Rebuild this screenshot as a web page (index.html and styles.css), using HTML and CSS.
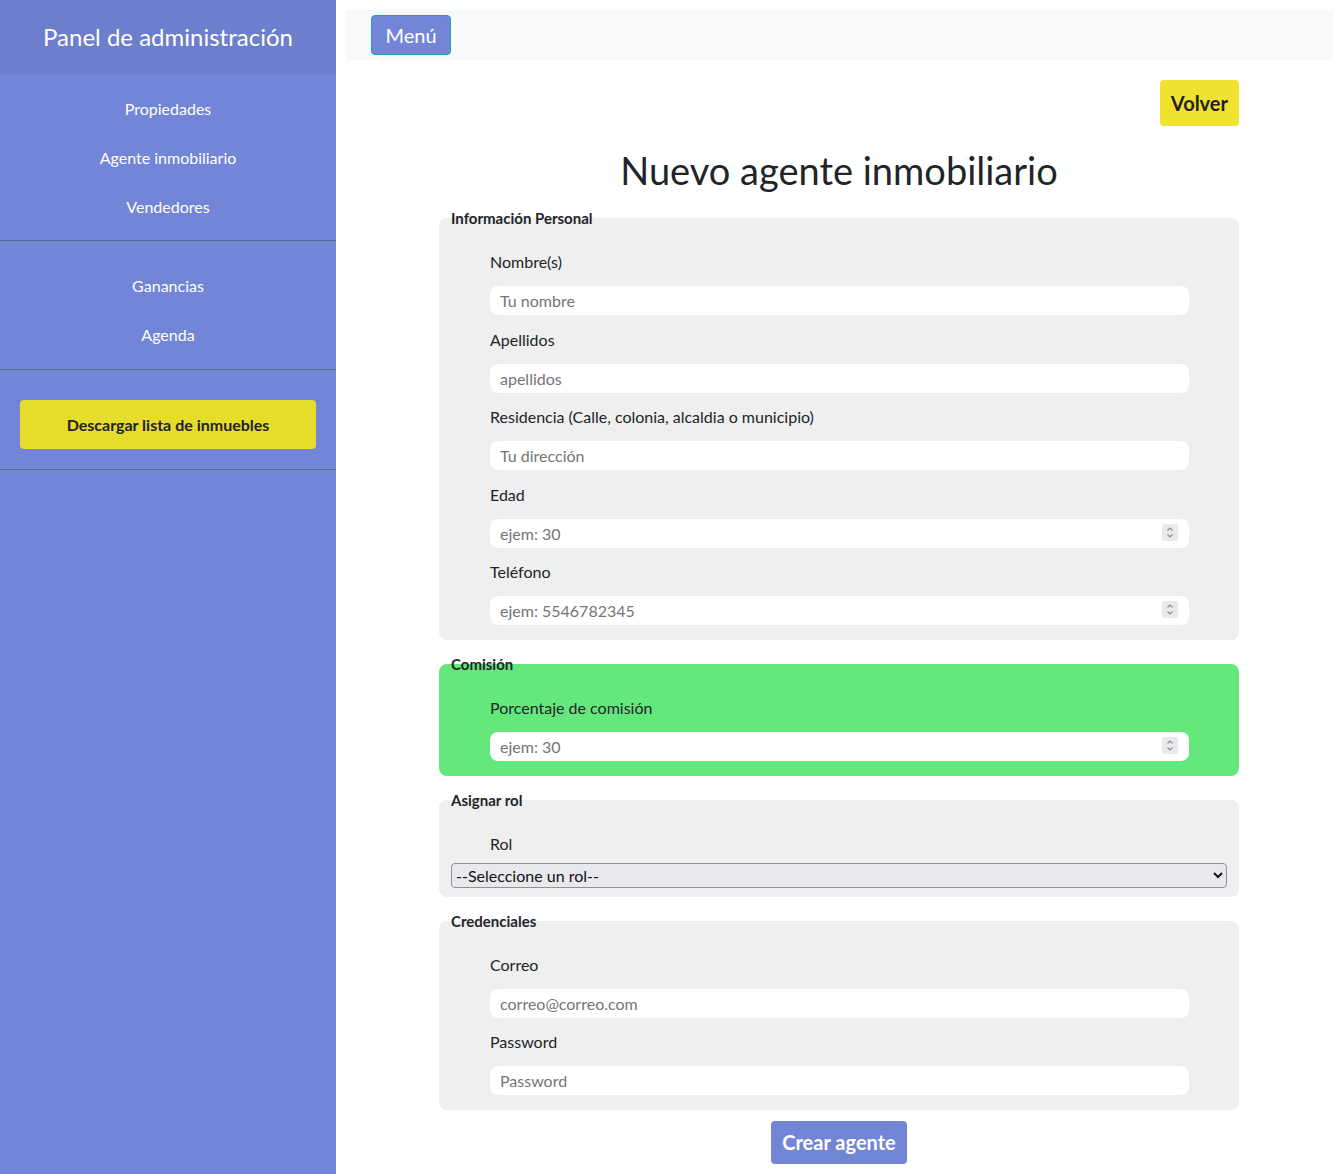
FILE: index.html
```html
<!DOCTYPE html>
<html lang="es">
<head>
<meta charset="utf-8">
<title>Nuevo agente inmobiliario</title>
<link rel="stylesheet" href="styles.css">
</head>
<body>
<div class="layout">
  <aside class="sidebar">
    <div class="sidebar-header">Panel de administración</div>
    <nav class="nav-section first">
      <a class="nav-link" href="#">Propiedades</a>
      <a class="nav-link" href="#">Agente inmobiliario</a>
      <a class="nav-link" href="#">Vendedores</a>
    </nav>
    <nav class="nav-section second">
      <a class="nav-link" href="#">Ganancias</a>
      <a class="nav-link" href="#">Agenda</a>
    </nav>
    <div class="nav-section third">
      <button class="download-btn" type="button">Descargar lista de inmuebles</button>
    </div>
  </aside>
  <main class="main">
    <div class="topbar">
      <button class="menu-btn" type="button">Menú</button>
    </div>
    <div class="container">
      <div class="back-row">
        <button class="back-btn" type="button">Volver</button>
      </div>
      <h1 class="title">Nuevo agente inmobiliario</h1>
      <form class="form">
        <fieldset class="group">
          <legend>Información Personal</legend>
          <div class="field">
            <label>Nombre(s)</label>
            <input type="text" placeholder="Tu nombre">
          </div>
          <div class="field">
            <label>Apellidos</label>
            <input type="text" placeholder="apellidos">
          </div>
          <div class="field">
            <label>Residencia (Calle, colonia, alcaldia o municipio)</label>
            <input type="text" placeholder="Tu dirección">
          </div>
          <div class="field">
            <label>Edad</label>
            <div class="num">
              <input type="number" placeholder="ejem: 30">
              <span class="spin"><svg width="16" height="17" viewBox="0 0 16 17"><path d="M5.5 6.5 L8 4 L10.5 6.5 M5.5 10.5 L8 13 L10.5 10.5" fill="none" stroke="#8a8a92" stroke-width="1.1"/></svg></span>
            </div>
          </div>
          <div class="field">
            <label>Teléfono</label>
            <div class="num">
              <input type="number" placeholder="ejem: 5546782345">
              <span class="spin"><svg width="16" height="17" viewBox="0 0 16 17"><path d="M5.5 6.5 L8 4 L10.5 6.5 M5.5 10.5 L8 13 L10.5 10.5" fill="none" stroke="#8a8a92" stroke-width="1.1"/></svg></span>
            </div>
          </div>
        </fieldset>
        <fieldset class="group green">
          <legend>Comisión</legend>
          <div class="field">
            <label>Porcentaje de comisión</label>
            <div class="num">
              <input type="number" placeholder="ejem: 30">
              <span class="spin"><svg width="16" height="17" viewBox="0 0 16 17"><path d="M5.5 6.5 L8 4 L10.5 6.5 M5.5 10.5 L8 13 L10.5 10.5" fill="none" stroke="#8a8a92" stroke-width="1.1"/></svg></span>
            </div>
          </div>
        </fieldset>
        <fieldset class="group role">
          <legend>Asignar rol</legend>
          <div class="field">
            <label>Rol</label>
          </div>
          <select class="select">
            <option>--Seleccione un rol--</option>
          </select>
        </fieldset>
        <fieldset class="group">
          <legend>Credenciales</legend>
          <div class="field">
            <label>Correo</label>
            <input type="email" placeholder="correo@correo.com">
          </div>
          <div class="field">
            <label>Password</label>
            <input type="password" placeholder="Password">
          </div>
        </fieldset>
        <div class="submit-row">
          <button class="submit-btn" type="button">Crear agente</button>
        </div>
      </form>
    </div>
  </main>
</div>
</body>
</html>
```

FILE: styles.css
```css
* { box-sizing: border-box; }

html, body {
  margin: 0;
  padding: 0;
  font-family: Lato, "Noto Sans", sans-serif;
  color: #212529;
  background: #fff;
}

.layout {
  display: flex;
  min-height: 1174px;
}

.sidebar {
  width: 336px;
  flex: 0 0 336px;
  background: #7385d6;
  color: #fff;
}

.sidebar-header {
  height: 74px;
  background: #6c7ecc;
  display: flex;
  align-items: center;
  justify-content: center;
  font-size: 24px;
  padding-bottom: 1px;
}

.nav-section {
  display: flex;
  flex-direction: column;
  border-bottom: 1px solid #4f6f8c;
}

.nav-section.first { padding: 11px 0 8px; }
.nav-section.second { padding: 21px 0 9px; }
.nav-section.third { padding: 30px 20px 20px; }

.nav-link {
  display: block;
  color: #fff;
  text-decoration: none;
  text-align: center;
  font-size: 16px;
  line-height: 24px;
  padding: 12px 0 13px;
}

.download-btn {
  width: 100%;
  height: 49px;
  border: none;
  border-radius: 4px;
  background: #e6dc2a;
  color: #222;
  font-family: inherit;
  font-weight: 700;
  font-size: 16px;
}

.main {
  flex: 1;
  padding: 10px;
}

.topbar {
  height: 50px;
  background: #f8f9fa;
  display: flex;
  align-items: center;
  padding: 0 25px;
}

.menu-btn {
  height: 40px;
  padding: 0 13.5px;
  background: #7385d6;
  color: #fff;
  border: 1px solid #1aa3b3;
  border-radius: 4px;
  font-family: inherit;
  font-size: 20px;
}

.container {
  width: 800px;
  margin: 20px 0 0 93px;
}

.back-row {
  display: flex;
  justify-content: flex-end;
}

.back-btn {
  height: 46px;
  padding: 0 11px;
  border: none;
  border-radius: 4px;
  background: #f0e22f;
  color: #222;
  font-family: inherit;
  font-weight: 700;
  font-size: 20px;
}

.title {
  margin: 21px 0 16px;
  text-align: center;
  font-weight: 400;
  font-size: 38px;
  line-height: 46px;
}

.group {
  margin: 0 0 15px;
  padding: 23px 12px 2px;
  border: none;
  border-radius: 8px;
  background: #efefef;
}

.group.green { background: #64e87c; }

.group legend {
  padding: 0;
  font-weight: 700;
  font-size: 15px;
  line-height: 18px;
}

.field {
  display: flex;
  flex-direction: column;
  padding: 0 38px 0 39px;
  margin-bottom: 12.6px;
}

.field label {
  font-size: 16px;
  line-height: 24px;
  margin-bottom: 12px;
}

.field input {
  width: 100%;
  height: 29px;
  border: none;
  border-radius: 8px;
  background: #fff;
  padding: 0 10px;
  font-family: inherit;
  font-size: 16px;
  color: #212529;
  outline: none;
}

.field input::placeholder { color: #757575; }

.field input[type=number] { -moz-appearance: textfield; }
.field input[type=number]::-webkit-inner-spin-button,
.field input[type=number]::-webkit-outer-spin-button {
  -webkit-appearance: none;
  margin: 0;
}

.num {
  position: relative;
}

.spin {
  position: absolute;
  right: 11px;
  top: 5px;
  width: 16px;
  height: 17px;
  background: #e9e9ed;
  border-radius: 2px;
  display: block;
}

.spin svg { display: block; }

.group.role .field { margin-bottom: 0; }
.group.role .field label { margin-bottom: 7px; }

.select {
  display: block;
  width: 100%;
  height: 25px;
  margin-bottom: 7px;
  font-family: inherit;
  font-size: 16px;
  color: #111;
  background: #e9e9ed;
  border: 1px solid #8f8f9d;
  border-radius: 4px;
}

.submit-row {
  display: flex;
  justify-content: center;
  margin-top: -4px;
}

.submit-btn {
  height: 43px;
  padding: 0 11.5px;
  border: none;
  border-radius: 4px;
  background: #7385d6;
  color: #fff;
  font-family: inherit;
  font-weight: 700;
  font-size: 20px;
}
```
